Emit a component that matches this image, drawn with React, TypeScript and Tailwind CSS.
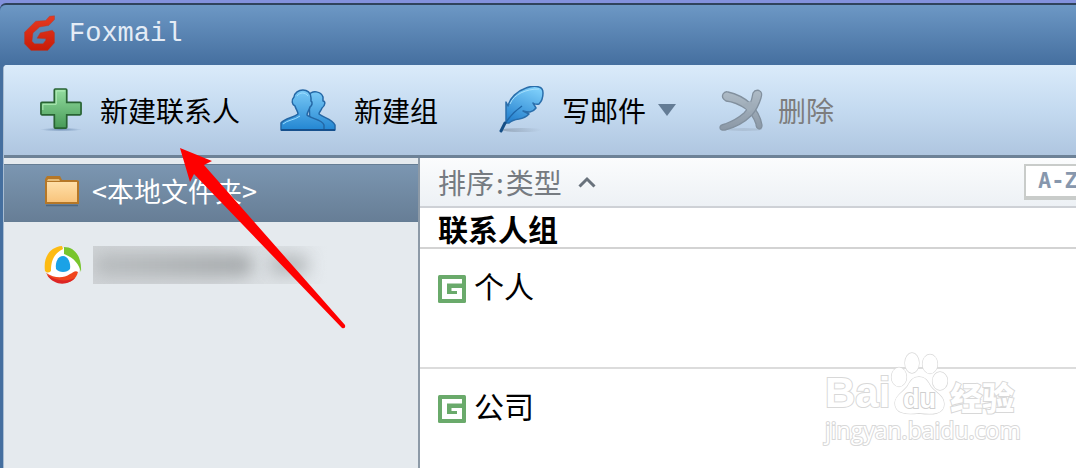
import React from "react";

function FoxLogo() {
  return (
    <svg viewBox="0 0 31 36" className="h-9 w-[31px] shrink-0" aria-hidden="true">
      <defs>
        <linearGradient id="fox" x1="0" y1="0" x2="0" y2="1">
          <stop offset="0" stopColor="#e63a22" />
          <stop offset="1" stopColor="#c81c08" />
        </linearGradient>
      </defs>
      <path
        fill="url(#fox)"
        stroke="#a8402f"
        strokeWidth="0.400"
        d="M30.500 0.800V4.500L24.700 10.500 15.700 12 9 18 8 26.200 10.500 28.800H19L21.700 25.200V23.800L13 23.200 16.300 17.800 28.300 15.200 30.500 17.800V27.800L23.700 35.500H7L0.500 28.800V17.200L11.700 6.200 21.700 5.500 25.500 1.200Z"
      />
    </svg>
  );
}

function PlusIcon() {
  return (
    <svg viewBox="0 0 44 46" className="h-[46px] w-[42px] shrink-0" aria-hidden="true">
      <defs>
        <linearGradient id="plus" x1="0" y1="0" x2="0" y2="1">
          <stop offset="0" stopColor="#94dda0" />
          <stop offset="1" stopColor="#479a57" />
        </linearGradient>
        <radialGradient id="shade">
          <stop offset="0" stopColor="#7290b5" />
          <stop offset="1" stopColor="#7290b5" stopOpacity="0" />
        </radialGradient>
      </defs>
      <ellipse cx="22" cy="43.500" rx="22" ry="2" fill="url(#shade)" />
      <path
        d="M16 1h11q1 0 1 1v13h14q1 0 1 1v11q0 1-1 1H28v13q0 1-1 1H16q-1 0-1-1V28H2q-1 0-1-1V16q0-1 1-1h13V2q0-1 1-1z"
        fill="url(#plus)"
        stroke="#286333"
        strokeWidth="1.800"
      />
      <path d="M17 3h9M17 3v14H3v6" fill="none" stroke="#b4edbb" strokeWidth="1" />
    </svg>
  );
}

function GroupIcon() {
  return (
    <svg viewBox="0 0 56 44" className="h-11 w-14 shrink-0" aria-hidden="true">
      <defs>
        <linearGradient id="person" x1="0" y1="0" x2="0" y2="1">
          <stop offset="0" stopColor="#79c9f6" />
          <stop offset="1" stopColor="#2386d2" />
        </linearGradient>
      </defs>
      <g fill="url(#person)" stroke="#2467a5" strokeWidth="1.500" strokeLinejoin="round">
        <path d="M29 7c3-5 12-4 14 2v4c3 0 2 5-1 7-1 3-3 4-3 6 5 4 13 5 16 11v5H30z" />
        <path d="M14 9c1-9 17-10 17 1v3c2 1 1 5-1 6-1 4-3 5-3 8 4 4 15 4 17 10v5H1v-7c4-5 12-5 17-9 0-3-2-4-3-8-3-1-4-6-1-9z" />
      </g>
      <path d="M3 36c4-4 12-4 17-8M17 8c3-4 8-4 11 0" fill="none" stroke="#9bdcff" strokeWidth="1" />
      <path d="M1 42h54" stroke="#16508d" strokeWidth="2" />
    </svg>
  );
}

function FeatherIcon() {
  return (
    <svg viewBox="0 0 46 48" className="h-12 w-[46px] shrink-0" aria-hidden="true">
      <defs>
        <linearGradient id="feather" x1="0.700" y1="0" x2="0.300" y2="1">
          <stop offset="0" stopColor="#7fd0fb" />
          <stop offset="1" stopColor="#2682cf" />
        </linearGradient>
        <linearGradient id="grey">
          <stop offset="0" stopColor="#8796a8" />
          <stop offset="1" stopColor="#8796a8" stopOpacity="0" />
        </linearGradient>
      </defs>
      <ellipse cx="24" cy="44" rx="20" ry="2" fill="url(#grey)" opacity="0.700" />
      <path
        d="M8 37V16l2 4C12 12 19 5 28 2q8-3 13-1 4 1 4 6 0 7-4 11-3 1-6-1l3 5q-2 3-6 4-4 0-7-1l6 3q-4 4-10 5-7 1-10 4z"
        fill="url(#feather)"
        stroke="#2a6eab"
        strokeWidth="1.500"
        strokeLinejoin="round"
      />
      <path d="M12 18C16 8 28 3 41 3" fill="none" stroke="#a8e0fc" strokeWidth="1" />
      <path d="M24 20C17 25 11 31 7 38" fill="none" stroke="#1f67a8" strokeWidth="1.500" />
      <path d="M7 37L3 45" stroke="#164f86" strokeWidth="3" strokeLinecap="round" />
    </svg>
  );
}

function CrossIcon() {
  return (
    <svg viewBox="0 1 44 42" className="h-[42px] w-11 shrink-0 overflow-visible" aria-hidden="true">
      <defs>
        <linearGradient id="cross" x1="0" y1="0" x2="0" y2="1">
          <stop offset="0" stopColor="#aebbc6" />
          <stop offset="1" stopColor="#8b98a6" />
        </linearGradient>
      </defs>
      <ellipse cx="28" cy="41.500" rx="18" ry="1.500" fill="#8d9cad" opacity="0.300" />
      <g fill="url(#cross)" stroke="#82909e" strokeWidth="1.300">
        <path d="M12 4Q25 7 34 15 44 25 46 37 46 41 43 41 40 40 40 36 37 27 30 21 20 14 10 13 5 10 7 6 9 3 12 4z" />
        <path d="M37 5Q39 1.500 43 2.500 47 4 45 10 42 20 36 27 25 38 9 42 4 42.500 4 39.500 4 37 9 36 20 32 28 25 35 18 37 5z" />
      </g>
      <path d="M27 17l7-4 5 5-6 6z" fill="#a0adb9" />
    </svg>
  );
}

function FolderIcon() {
  return (
    <svg viewBox="0 0 36 32" className="h-8 w-9 shrink-0" aria-hidden="true">
      <defs>
        <linearGradient id="folder" x1="0" y1="0" x2="0" y2="1">
          <stop offset="0" stopColor="#ffdfa8" />
          <stop offset="1" stopColor="#f8c47c" />
        </linearGradient>
      </defs>
      <path d="M1 29V4l2-3h13l2 4h15l2 1v23z" fill="#b57727" />
      <path d="M3 6l1-2h11l1 2z" fill="#e6bd79" />
      <path d="M3 7h30v20H3z" fill="url(#folder)" />
      <path d="M2 30.500h32" stroke="#4f6880" strokeWidth="1.500" />
    </svg>
  );
}

function MailLogo() {
  return (
    <svg viewBox="0 0 38 38" className="h-[38px] w-[38px] shrink-0" aria-hidden="true">
      <circle cx="19" cy="19" r="17" fill="#fff" />
      <path d="M18 0C6 1-1 11 1 25q3 3 6 0C7 16 9 8 19 3z" fill="#fdbb13" />
      <path d="M20 1c11 0 18 10 17 25-2-7-6-14-17-18z" fill="#78c52d" />
      <path d="M2 27c8 14 29 13 32-1-3-2-5 1-8 2-7 5-16 4-24-1z" fill="#f0451e" />
      <path d="M3 29c8 12 22 10 28 3-9 4-19 3-28-3z" fill="#dd2524" />
      <path d="M19 10c5 0 8 7 7 13-3 4-11 4-14 0-1-7 2-13 7-13z" fill="#1ba2e6" />
    </svg>
  );
}

function GroupMark() {
  return (
    <svg viewBox="0 0 28 28" className="h-7 w-7 shrink-0" aria-hidden="true">
      <rect width="28" height="28" rx="1.500" fill="#6aaa6b" />
      <path fill="#fff" d="M4 4h20v4.500H9v10.500h10v-3h-5.500V13H24v11H4z" />
    </svg>
  );
}

function ToolButton({ icon, label, disabled, className = "", children }: {
  icon: React.ReactNode;
  label: string;
  disabled?: boolean;
  className?: string;
  children?: React.ReactNode;
}) {
  return (
    <button
      type="button"
      disabled={disabled}
      className={`flex shrink-0 items-center whitespace-nowrap text-[28px] leading-9 text-black disabled:text-[#7d7d7d] ${className}`}
    >
      {icon}
      <span className="ml-[18px]">{label}</span>
      {children}
    </button>
  );
}

function GroupRow({ name }: { name: string }) {
  return (
    <li className="flex h-[120px] items-start gap-2 border-b-2 border-[#dcdcdc] pt-4 pl-[18px] last:border-0">
      <span className="pt-[10px]">
        <GroupMark />
      </span>
      <span className="text-[30px] leading-10 text-black">{name}</span>
    </li>
  );
}

function Watermark() {
  return (
    <div className="pointer-events-none absolute top-[348px] left-[825px] text-white [paint-order:stroke_fill] [-webkit-text-stroke:2px_#d8d8d8]">
      <div className="flex h-[68px] items-end font-bold">
        <span className="font-['Liberation_Sans',sans-serif] text-[42px] leading-[46px]">Bai</span>
        <svg viewBox="0 0 58 68" className="h-[68px] w-[58px]" aria-hidden="true">
          <g fill="#fff" stroke="#d8d8d8" strokeWidth="1.300">
            <ellipse cx="9" cy="29" rx="7.500" ry="9.500" />
            <ellipse cx="22" cy="15" rx="7" ry="10" />
            <ellipse cx="40" cy="16" rx="7.500" ry="9.500" />
            <ellipse cx="50" cy="33" rx="7.500" ry="9" />
            <path d="M29 29c7 0 9 5 12 10 5 6 13 9 13 17 0 10-11 11-25 9-14 2-24 0-24-10 0-7 8-11 12-16 3-5 5-10 12-10z" />
          </g>
          <text x="13" y="60" fontSize="27" fontFamily="Liberation Sans, sans-serif" fontWeight="700" fill="#fff" stroke="#cfcfcf" strokeWidth="2">
            du
          </text>
        </svg>
        <span className="mb-[2px] ml-[2px] text-[32px] leading-9 font-black">经验</span>
      </div>
      <div className="font-['Open_Sans',sans-serif] text-[23px] leading-7">jingyan.baidu.com</div>
    </div>
  );
}

export default function App() {
  return (
    <div className="relative flex min-h-screen w-full flex-col overflow-hidden bg-[#8291dc] pt-[3px] font-['Noto_Sans_CJK_SC',sans-serif]">
      <div className="flex flex-1 flex-col rounded-tl-md border-t-2 border-[#2f435c] bg-[#456f9f]">
        <header className="flex h-[60px] items-center gap-[14px] rounded-tl-md bg-linear-to-b from-[#6d98c5] to-[#456f9f] pb-1 pl-6">
          <FoxLogo />
          <h1 className="pt-[2px] font-['Liberation_Mono',monospace] text-[27px] leading-8 text-[#e4ecf6]">Foxmail</h1>
        </header>

        <main className="ml-[3px] flex flex-1 flex-col overflow-hidden rounded-tl border-l border-[#a9bdd2] bg-white">
          <div
            role="toolbar"
            aria-label="工具栏"
            className="flex h-[93px] shrink-0 items-center gap-10 overflow-hidden border-b-3 border-[#6d8297] bg-linear-to-b from-[#daebfa] via-[#c4daf0] to-[#afc6e0] pl-9"
          >
            <ToolButton icon={<PlusIcon />} label="新建联系人" />
            <ToolButton icon={<GroupIcon />} label="新建组" />
            <ToolButton icon={<FeatherIcon />} label="写邮件" className="ml-5">
              <svg viewBox="0 0 18 12" className="ml-3 h-3 w-[18px]" aria-hidden="true">
                <path d="M0 0h18L9 12z" fill="#647c95" />
              </svg>
            </ToolButton>
            <ToolButton icon={<CrossIcon />} label="删除" disabled />
          </div>

          <div className="flex flex-1">
            <nav className="w-[416px] shrink-0 border-r-2 border-[#8d9aa7] bg-[#e5eaee] pt-[6px]">
              <a
                href="#local"
                className="flex h-[58px] items-center gap-3 border-y border-[#657d94] bg-linear-to-b from-[#7b96b1] to-[#677e96] pb-1 pl-10 text-[27px] leading-9 text-white"
              >
                <FolderIcon />
                <span>&lt;本地文件夹&gt;</span>
              </a>
              <a href="#account" aria-label="邮箱帐号" className="mt-6 flex items-center gap-[11px] pl-10">
                <MailLogo />
                <span className="flex h-[38px] w-[235px] items-center overflow-hidden bg-linear-to-r from-[#cfd3d6] via-[#d3d7da] to-[#e5eaee]">
                  <span className="h-[22px] w-[160px] rounded-full bg-linear-to-r from-[#b4b8ba] to-[#999d9f] opacity-80 blur-[8px]" />
                  <span className="ml-4 h-5 w-10 rounded-full bg-[#a6aaac] opacity-70 blur-[8px]" />
                </span>
              </a>
            </nav>

            <section className="min-w-0 flex-1 bg-white">
              <div className="flex h-[50px] items-center justify-between overflow-hidden border-b-2 border-[#ced1d6] bg-linear-to-b from-[#fbfcfd] to-[#edf1f5] pl-[18px]">
                <button type="button" className="flex shrink-0 items-center text-[28px] leading-9 text-[#767b81]">
                  <span>
                    排序<span className="px-[2px]">:</span>类型
                  </span>
                  <svg viewBox="0 0 18 12" className="ml-4 h-3 w-[18px]" aria-hidden="true">
                    <path d="M1.500 10.500L9 3l7.500 7.500" fill="none" stroke="#69727c" strokeWidth="3" />
                  </svg>
                </button>
                <button
                  type="button"
                  className="-mr-5 h-9 w-[72px] shrink-0 border-2 border-b-4 border-[#c9ccca] bg-white pl-3 text-left font-['DejaVu_Sans_Mono',monospace] text-[22px] leading-7 font-bold text-[#8797ad]"
                >
                  A-Z
                </button>
              </div>
              <h2 className="h-[41px] border-b-2 border-[#d3d3d3] pl-[18px] text-[30px] leading-10 font-bold text-black">联系人组</h2>
              <ul>
                <GroupRow name="个人" />
                <GroupRow name="公司" />
              </ul>
            </section>
          </div>
        </main>
      </div>

      <Watermark />

      <svg viewBox="0 0 168 182" className="pointer-events-none absolute top-[148px] left-[180px] h-[182px] w-[168px]" aria-hidden="true">
        <path d="M0 0L32 13 24 17 165 177Q166 181 162 180L14 26 10 34Z" fill="#fe0000" />
      </svg>
    </div>
  );
}
